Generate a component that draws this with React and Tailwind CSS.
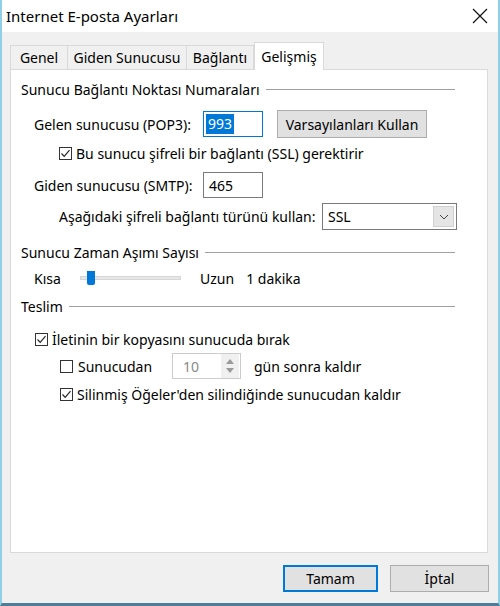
import { useState } from "react";

function Check({ checked }) {
  return (
    <span className="w-[13px] h-[13px] border border-[#333] bg-white flex items-center justify-center shrink-0">
      {checked && (
        <svg width="11" height="11" viewBox="0 0 11 11" fill="none">
          <path d="M1.5 5.5 L4.2 8.3 L9.5 2.2" stroke="#222" strokeWidth="1.2" />
        </svg>
      )}
    </span>
  );
}

function SectionTitle({ children }) {
  return (
    <div className="flex items-center pr-[32px]">
      <span className="whitespace-nowrap">{children}</span>
      <div className="flex-1 h-px bg-[#a0a0a0] ml-[6px]" />
    </div>
  );
}

export default function App() {
  const [tab] = useState("Gelişmiş");
  const tabs = ["Genel", "Giden Sunucusu", "Bağlantı", "Gelişmiş"];
  const tabWidths = {
    Genel: "w-[58px]",
    "Giden Sunucusu": "w-[120px]",
    Bağlantı: "w-[68px]",
    Gelişmiş: "w-[70px]",
  };

  return (
    <div className="w-[500px] h-[606px] flex flex-col bg-[#f0f0f0] border-l-2 border-r-2 border-b-[3px] border-l-[#8fd0e6] border-r-[#8fd0e6] border-b-[#4f7d99] text-[14px] text-black font-['Segoe_UI','Noto_Sans',sans-serif] overflow-hidden">
      {/* title bar */}
      <div className="h-[32px] bg-white flex items-center justify-between pl-[4px] pr-[10px] shrink-0">
        <span className="text-[15px]">Internet E-posta Ayarları</span>
        <svg width="16" height="16" viewBox="0 0 16 16">
          <path d="M1 1 L15 15 M15 1 L1 15" stroke="#111" strokeWidth="1.2" />
        </svg>
      </div>

      <div className="flex-1 flex flex-col px-[8px]">
        {/* tabs */}
        <div className="flex items-end h-[37px]">
          {tabs.map((t) =>
            t === tab ? (
              <div
                key={t}
                className={`${tabWidths[t]} h-[28px] bg-white border border-b-0 border-[#d9d9d9] flex items-center justify-center -mb-px relative z-10`}
              >
                {t}
              </div>
            ) : (
              <div
                key={t}
                className={`${tabWidths[t]} h-[24px] bg-[#f0f0f0] border border-b-0 border-[#d9d9d9] -ml-px first:ml-0 flex items-center justify-center`}
              >
                {t}
              </div>
            )
          )}
        </div>

        {/* panel */}
        <div className="h-[484px] w-[478px] bg-white border border-[#d9d9d9] pl-[10px] pt-[9px] flex flex-col">
          <SectionTitle>Sunucu Bağlantı Noktası Numaraları</SectionTitle>

          <div className="flex items-center mt-[10px] h-[28px]">
            <span className="ml-[13px] w-[169px] shrink-0">Gelen sunucusu (POP3):</span>
            <div className="w-[60px] h-[26px] border border-[#0078d7] bg-white flex items-center px-[2px] shrink-0">
              <span className="bg-[#0078d7] text-white leading-[20px] px-[2px]">993</span>
            </div>
            <button className="ml-[14px] w-[150px] h-[28px] bg-[#e1e1e1] border border-[#adadad] flex items-center justify-center shrink-0">
              Varsayılanları Kullan
            </button>
          </div>

          <div className="flex items-center mt-[4px] ml-[38px] h-[22px] gap-[4px]">
            <Check checked />
            <span>Bu sunucu şifreli bir bağlantı (SSL) gerektirir</span>
          </div>

          <div className="flex items-center mt-[8px] h-[26px]">
            <span className="ml-[13px] w-[169px] shrink-0">Giden sunucusu (SMTP):</span>
            <div className="w-[60px] h-[26px] border border-[#7a7a7a] bg-white flex items-center px-[5px] shrink-0">
              465
            </div>
          </div>

          <div className="flex items-center mt-[5px] h-[27px]">
            <span className="ml-[38px] w-[263px] shrink-0">Aşağıdaki şifreli bağlantı türünü kullan:</span>
            <div className="w-[135px] h-[27px] border border-[#7a7a7a] bg-white flex items-center justify-between pl-[5px] pr-[2px] shrink-0">
              <span>SSL</span>
              <div className="w-[21px] h-[21px] bg-[#e5e5e5] border border-[#cfcfcf] flex items-center justify-center">
                <svg width="10" height="6" viewBox="0 0 10 6" fill="none">
                  <path d="M1 1 L5 5 L9 1" stroke="#444" strokeWidth="1" />
                </svg>
              </div>
            </div>
          </div>

          <div className="mt-[12px]">
            <SectionTitle>Sunucu Zaman Aşımı Sayısı</SectionTitle>
          </div>

          <div className="flex items-center mt-[5px] h-[20px]">
            <span className="ml-[13px] w-[46px] shrink-0">Kısa</span>
            <div className="relative w-[101px] h-[4px] bg-[#e7e7e7] border border-[#d6d6d6] shrink-0">
              <div className="absolute left-[6px] -top-[6px] w-[8px] h-[14px] bg-[#0078d7] rounded-b-[2px]" />
            </div>
            <span className="ml-[19px]">Uzun</span>
            <span className="ml-[12px]">1 dakika</span>
          </div>

          <div className="mt-[8px]">
            <SectionTitle>Teslim</SectionTitle>
          </div>

          <div className="flex items-center mt-[11px] ml-[14px] h-[22px] gap-[4px]">
            <Check checked />
            <span>İletinin bir kopyasını sunucuda bırak</span>
          </div>

          <div className="flex items-center mt-[3px] ml-[39px] h-[26px]">
            <Check />
            <span className="ml-[5px] w-[94px] shrink-0">Sunucudan</span>
            <div className="w-[69px] h-[26px] border border-[#cccccc] bg-white flex items-center justify-between shrink-0">
              <span className="ml-[10px] text-[#8a8a8a]">10</span>
              <div className="w-[18px] h-[24px] bg-[#f0f0f0] flex flex-col items-center justify-center gap-[4px] mr-px">
                <svg width="8" height="5" viewBox="0 0 8 5">
                  <path d="M0 5 L4 0 L8 5 Z" fill="#9a9a9a" />
                </svg>
                <svg width="8" height="5" viewBox="0 0 8 5">
                  <path d="M0 0 L4 5 L8 0 Z" fill="#9a9a9a" />
                </svg>
              </div>
            </div>
            <span className="ml-[13px]">gün sonra kaldır</span>
          </div>

          <div className="flex items-center mt-[4px] ml-[39px] h-[22px] gap-[4px]">
            <Check checked />
            <span>Silinmiş Öğeler'den silindiğinde sunucudan kaldır</span>
          </div>
        </div>

        {/* buttons */}
        <div className="flex justify-end gap-[12px] mt-[12px] pr-[1px]">
          <button className="w-[95px] h-[27px] bg-[#e1e1e1] border-2 border-[#0078d7] flex items-center justify-center">
            Tamam
          </button>
          <button className="w-[99px] h-[27px] bg-[#e1e1e1] border border-[#adadad] flex items-center justify-center">
            İptal
          </button>
        </div>
      </div>
    </div>
  );
}
